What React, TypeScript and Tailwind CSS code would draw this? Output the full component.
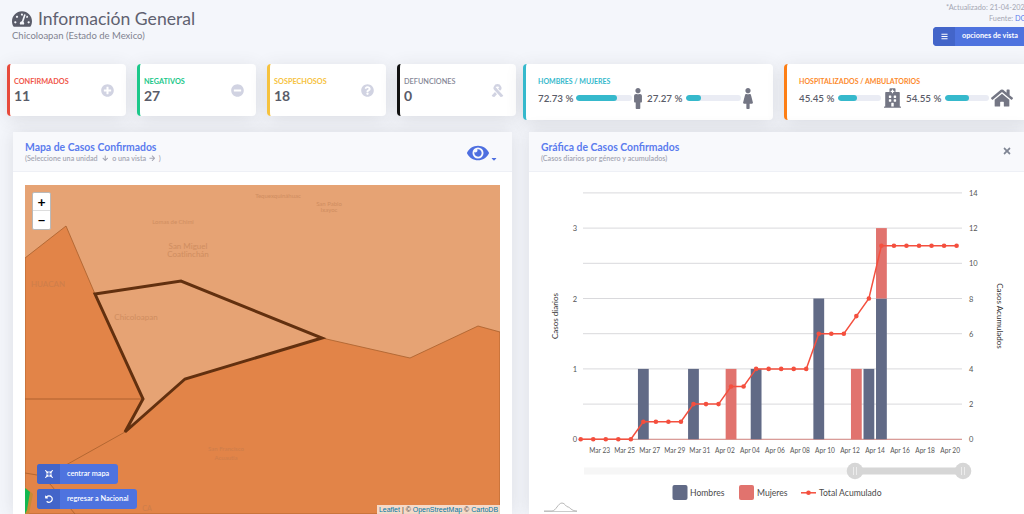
import {
  FaArrowDown,
  FaArrowRight,
  FaBars,
  FaCaretDown,
  FaCompressArrowsAlt,
  FaEye,
  FaFemale,
  FaHome,
  FaHospital,
  FaMale,
  FaMinusCircle,
  FaPlusCircle,
  FaQuestionCircle,
  FaRibbon,
  FaTachometerAlt,
  FaTimes,
  FaUndoAlt,
} from "react-icons/fa";
import type { ReactNode } from "react";

const font = { fontFamily: "Lato, 'Noto Sans', sans-serif" };

function SmallCard({ label, value, color, text, icon }: { label: string; value: string; color: string; text: string; icon: ReactNode }) {
  return (
    <div className={`w-[119px] h-[52px] bg-white rounded border-l-[3px] ${color} shadow-[0_3px_18px_rgba(58,59,69,0.13)] pl-[4px] pr-3 flex items-center justify-between`}>
      <div className="mt-[2px]">
        <div className={`text-[7.3px] leading-[10px] font-bold uppercase ${text}`}>{label}</div>
        <div className="text-[14px] leading-[18px] font-bold text-[#5a5c69]">{value}</div>
      </div>
      <div className="text-[13px] text-[#d1d3e2] mt-[1px]">{icon}</div>
    </div>
  );
}

function Bar({ w, fill }: { w: string; fill: string }) {
  return (
    <div className={`${w} h-[6px] bg-[#eaecf4] rounded-full overflow-hidden`}>
      <div className={`${fill} h-full bg-[#36b9cc] rounded-full`} />
    </div>
  );
}

function Pct({ value }: { value: string }) {
  return <span className="block w-[35px] shrink-0 text-[9.8px] leading-[12px] font-semibold text-[#5a5c69] whitespace-nowrap">{value}</span>;
}

function WideCard({ width, border, title, titleColor, children }: { width: string; border: string; title: string; titleColor: string; children: ReactNode }) {
  return (
    <div className={`${width} h-[56px] bg-white rounded border-l-[3px] ${border} shadow-[0_3px_18px_rgba(58,59,69,0.13)] pl-3 pt-[12px]`}>
      <div className={`text-[7px] leading-[10px] font-bold uppercase ${titleColor}`}>{title}</div>
      <div className="flex items-center h-[22px] mt-[1px]">{children}</div>
    </div>
  );
}

function PanelHeader({ title, sub, children }: { title: string; sub: ReactNode; children: ReactNode }) {
  return (
    <div className="h-[40px] bg-[#f8f9fc] border-b border-[#eef0f6] flex justify-between items-start pl-3 pr-3 pt-[8px] shrink-0">
      <div>
        <div className="text-[10.4px] leading-[14px] font-bold text-[#5b7cee]">{title}</div>
        <div className="text-[7.2px] leading-[9px] font-semibold text-[#a4a6b3]">{sub}</div>
      </div>
      {children}
    </div>
  );
}

function SplitButton({ icon, label, w }: { icon: ReactNode; label: string; w: string }) {
  return (
    <div className={`${w} h-[20px] flex rounded-[3px] overflow-hidden bg-[#4e73df] text-white`}>
      <div className="w-[23px] bg-[#4365c9] flex items-center justify-center text-[8px]">{icon}</div>
      <div className="flex-1 flex items-center pl-[7px] text-[7.3px] font-semibold whitespace-nowrap">{label}</div>
    </div>
  );
}

const mapLabels: { x: number; y: number; t: string; size: number }[] = [
  { x: 278, y: 198, t: "Tequexquináhuac", size: 6 },
  { x: 329, y: 206, t: "San Pablo", size: 6 },
  { x: 329, y: 212, t: "Ixayoc", size: 6 },
  { x: 173, y: 224, t: "Lomas de Chimi", size: 6 },
  { x: 188, y: 249, t: "San Miguel", size: 8 },
  { x: 188, y: 257, t: "Coatlinchán", size: 8 },
  { x: 48, y: 287, t: "HUACAN", size: 8 },
  { x: 136, y: 320, t: "Chicoloapan", size: 8 },
  { x: 226, y: 451, t: "San Francisco", size: 6 },
  { x: 226, y: 460, t: "Acuautla", size: 6 },
  { x: 147, y: 511, t: "CA", size: 7 },
];

function MapArt() {
  return (
    <svg viewBox="25 185 475 329" className="block w-[475px] h-[329px]">
      <rect x="25" y="185" width="475" height="329" fill="#e6a374" />
      <polygon
        points="25,258 66,226 95,294 143,399 125,432 185,379 322,338 410,358 478,326 500,332 500,514 25,514"
        fill="#e28448"
        stroke="#a85f2c"
        strokeWidth="0.8"
      />
      <polyline points="25,399 143,399" fill="none" stroke="#a2592a" strokeWidth="0.8" />
      <polyline points="125,432 66,465" fill="none" stroke="#a85f2c" strokeWidth="0.8" />
      <polyline points="25,473 37,475 50,484 75,514" fill="none" stroke="#a85f2c" strokeWidth="0.8" />
      <polygon points="25,487 33,494 29,514 25,514" fill="#c98a35" />
      <polygon points="25,488 30,492 27,510 25,514" fill="#12b84f" />
      <polygon
        points="95,294 181,281 322,338 185,379 125,432 143,399"
        fill="#e6a374"
        stroke="#62300f"
        strokeWidth="3"
        strokeLinejoin="miter"
      />
      {mapLabels.map((l) => (
        <text key={l.t} x={l.x} y={l.y} textAnchor="middle" fontSize={l.size} fill="#b9794e" opacity="0.5" fontFamily="Lato, sans-serif">
          {l.t}
        </text>
      ))}
    </svg>
  );
}

const cum = [0, 0, 0, 0, 0, 1, 1, 1, 1, 2, 2, 2, 3, 3, 4, 4, 4, 4, 4, 6, 6, 6, 7, 8, 11, 11, 11, 11, 11, 11, 11];
const men: Record<number, number> = { 5: 1, 9: 1, 14: 1, 19: 2, 23: 1, 24: 2 };
const women: Record<number, number> = { 12: 1, 22: 1, 24: 1 };
const dates = ["Mar 23", "Mar 25", "Mar 27", "Mar 29", "Mar 31", "Apr 02", "Apr 04", "Apr 06", "Apr 08", "Apr 10", "Apr 12", "Apr 14", "Apr 16", "Apr 18", "Apr 20"];

const px = (i: number) => 580.7 + i * 12.53;
const py = (v: number) => 439.3 - v * 17.6;
const unit = 70.4; // alto de un caso diario

function ChartArt() {
  const grid = [0, 2, 4, 6, 8, 10, 12, 14];
  return (
    <svg viewBox="529 172 495 342" className="block w-[495px] h-[342px]" fontFamily="Lato, sans-serif">
      {grid.map((g) => (
        <g key={g}>
          <line x1="583" x2="962" y1={py(g)} y2={py(g)} stroke="#d9d9dc" strokeWidth="1" />
          <text x="969" y={py(g) + 3} fontSize="7.5" fill="#555">{g}</text>
        </g>
      ))}
      {[0, 1, 2, 3].map((n) => (
        <text key={n} x="577" y={439.3 - n * unit + 3} fontSize="7.5" fill="#555" textAnchor="end">{n}</text>
      ))}
      <line x1="583" x2="962" y1="439.3" y2="439.3" stroke="#d98b85" strokeWidth="1" />
      {cum.map((_, i) => {
        const m = men[i] || 0;
        const w = women[i] || 0;
        return (
          <g key={i}>
            {m > 0 && <rect x={px(i) - 5.4} y={439.3 - m * unit} width="10.8" height={m * unit} fill="#616a86" />}
            {w > 0 && <rect x={px(i) - 5.4} y={439.3 - (m + w) * unit} width="10.8" height={w * unit} fill="#e1736e" />}
          </g>
        );
      })}
      <polyline
        points={cum.map((v, i) => `${px(i)},${py(v)}`).join(" ")}
        fill="none"
        stroke="#f44f3e"
        strokeWidth="1.5"
      />
      {cum.map((v, i) => (
        <circle key={i} cx={px(i)} cy={py(v)} r="2.3" fill="#f44f3e" />
      ))}
      {dates.map((d, i) => (
        <text key={d} x={599.7 + i * 25.03} y="453" fontSize="6.6" fill="#555" textAnchor="middle">{d}</text>
      ))}
      <text transform="translate(558 316) rotate(-90)" fontSize="8" fill="#333" textAnchor="middle">Casos diarios</text>
      <text transform="translate(997 316) rotate(90)" fontSize="8" fill="#333" textAnchor="middle">Casos Acumulados</text>

      <rect x="584" y="467.5" width="272" height="7" fill="#f6f6f6" />
      <rect x="855" y="467.5" width="108" height="7" fill="#d6d6d6" />
      {[855, 963].map((c) => (
        <g key={c}>
          <circle cx={c} cy="471" r="8.3" fill="#d6d6d6" />
          <line x1={c - 1.5} x2={c - 1.5} y1="467" y2="475" stroke="#ececec" strokeWidth="1" />
          <line x1={c + 1.5} x2={c + 1.5} y1="467" y2="475" stroke="#ececec" strokeWidth="1" />
        </g>
      ))}

      <rect x="672.5" y="485" width="15" height="15" rx="2" fill="#616a86" />
      <text x="690" y="496" fontSize="8.6" fill="#4a4a4a">Hombres</text>
      <rect x="739" y="485" width="15" height="15" rx="2" fill="#e1736e" />
      <text x="757" y="496" fontSize="8.6" fill="#4a4a4a">Mujeres</text>
      <line x1="801" x2="816" y1="492.8" y2="492.8" stroke="#f44f3e" strokeWidth="1.5" />
      <circle cx="808.5" cy="492.8" r="2.3" fill="#f44f3e" />
      <text x="819" y="496" fontSize="8.6" fill="#4a4a4a">Total Acumulado</text>

      <path d="M544 511 H552 C556 511 558 503 562 503 C565 503 566 507 568 507 C570 507 571 511 577 511" fill="none" stroke="#9a9a9a" strokeWidth="0.7" />
      <line x1="544" x2="577" y1="511.5" y2="511.5" stroke="#b5b5b5" strokeWidth="0.7" />
    </svg>
  );
}

export default function App() {
  return (
    <div className="w-[1024px] h-[514px] overflow-hidden bg-[#f4f6fb] text-[#5a5c69]" style={font}>
      <header className="h-[64px] flex justify-between pl-3">
        <div className="pt-[8px]">
          <div className="flex items-center gap-[6px]">
            <FaTachometerAlt className="text-[20px] text-[#5a5c69]" />
            <h1 className="text-[17.6px] leading-[22px] text-[#5f6170]">Información General</h1>
          </div>
          <div className="text-[9.5px] leading-[12px] text-[#80828f]">Chicoloapan (Estado de Mexico)</div>
        </div>
        <div className="w-[91px] shrink-0 pt-[3px]">
          <div className="text-[7.3px] leading-[10px] text-[#a4a6b3] whitespace-nowrap ml-[13px]">*Actualizado: 21-04-2020</div>
          <div className="text-[7.3px] leading-[10px] text-[#a4a6b3] whitespace-nowrap mt-[1px] ml-[56px]">
            Fuente: <span className="text-[#5b7cee]">DGE</span>
          </div>
          <div className="w-[100px] h-[19px] flex rounded-l-[4px] overflow-hidden bg-[#4e73df] text-white mt-[3px]">
            <div className="w-[22px] bg-[#4365c9] flex items-center justify-center text-[7px]"><FaBars /></div>
            <div className="flex-1 pl-[7px] flex items-center text-[7.3px] font-bold whitespace-nowrap">opciones de vista</div>
          </div>
        </div>
      </header>

      <section className="flex items-start pl-[7px] h-[68px]">
        <div className="flex gap-[11px]">
          <SmallCard label="Confirmados" value="11" color="border-[#e74a3b]" text="text-[#f0564a]" icon={<FaPlusCircle />} />
          <SmallCard label="Negativos" value="27" color="border-[#1cc88a]" text="text-[#1cc88a]" icon={<FaMinusCircle />} />
          <SmallCard label="Sospechosos" value="18" color="border-[#f6c23e]" text="text-[#f6c23e]" icon={<FaQuestionCircle />} />
          <SmallCard label="Defunciones" value="0" color="border-[#111111]" text="text-[#858796] font-semibold" icon={<FaRibbon />} />
        </div>
        <div className="ml-[7px] flex gap-[11px]">
          <WideCard width="w-[250px]" border="border-[#36b9cc]" title="Hombres / Mujeres" titleColor="text-[#36b9cc]">
            <Pct value="72.73 %" />
            <div className="ml-[3px]"><Bar w="w-[56px]" fill="w-[73%]" /></div>
            <FaMale className="text-[21px] text-[#747684] ml-[-2px] w-[16px]" />
            <div className="ml-[1px]"><Pct value="27.27 %" /></div>
            <div className="ml-[4px]"><Bar w="w-[55px]" fill="w-[27%]" /></div>
            <FaFemale className="text-[21px] text-[#747684] ml-[-1px] w-[16px]" />
          </WideCard>
          <WideCard width="w-[250px]" border="border-[#fd7e14]" title="Hospitalizados / Ambulatorios" titleColor="text-[#fd8a2c]">
            <Pct value="45.45 %" />
            <div className="ml-[4px]"><Bar w="w-[43px]" fill="w-[45%]" /></div>
            <FaHospital className="text-[20px] text-[#747684] ml-[3px] w-[17px]" />
            <div className="ml-[5px]"><Pct value="54.55 %" /></div>
            <div className="ml-[4px]"><Bar w="w-[44px]" fill="w-[55%]" /></div>
            <FaHome className="text-[22px] text-[#747684] ml-[2px]" />
          </WideCard>
        </div>
      </section>

      <main className="flex gap-[17px] pl-[13px]">
        <div className="w-[499px] h-[382px] bg-white rounded-t shadow-[0_0_18px_rgba(58,59,69,0.13)] flex flex-col shrink-0">
          <PanelHeader
            title="Mapa de Casos Confirmados"
            sub={
              <span className="inline-flex items-center gap-[3px]">
                (Seleccione una unidad <FaArrowDown className="text-[6.5px] mx-[1px]" /> o una vista <FaArrowRight className="text-[6.5px]" />)
              </span>
            }
          >
            <div className="flex items-end text-[#4e6fe0] mr-[2px] mt-[2px]">
              <FaEye className="text-[22px]" />
              <FaCaretDown className="text-[8px] ml-[1px] mb-[1px]" />
            </div>
          </PanelHeader>
          <div className="pl-3 pt-[13px]">
            <div className="relative w-[475px] h-[329px] overflow-hidden">
              <MapArt />
              <div className="absolute left-[7px] top-[7px] w-[19px] h-[38px] bg-white rounded-[2px] border border-[#b9b9b9] flex flex-col text-black font-bold">
                <div className="h-[18px] border-b border-[#dddddd] flex items-center justify-center text-[14px] leading-none">+</div>
                <div className="flex-1 flex items-center justify-center text-[14px] leading-none">−</div>
              </div>
              <div className="absolute left-[12px] top-[279px] flex flex-col gap-[5px]">
                <SplitButton icon={<FaCompressArrowsAlt />} label="centrar mapa" w="w-[81px]" />
                <SplitButton icon={<FaUndoAlt />} label="regresar a Nacional" w="w-[100px]" />
              </div>
              <div className="absolute right-0 bottom-0 h-[9px] w-[123px] bg-[#ffffffb3] font-['Liberation_Sans',sans-serif] text-[7px] leading-[9px] text-[#333] text-center whitespace-nowrap">
                <span className="text-[#0078a8]">Leaflet</span> | © <span className="text-[#0078a8]">OpenStreetMap</span> © <span className="text-[#0078a8]">CartoDB</span>
              </div>
            </div>
          </div>
        </div>

        <div className="w-[495px] h-[382px] bg-white rounded-t shadow-[0_0_18px_rgba(58,59,69,0.13)] flex flex-col shrink-0">
          <PanelHeader title="Gráfica de Casos Confirmados" sub="(Casos diarios por género y acumulados)">
            <FaTimes className="text-[10px] text-[#7f8594] mt-[6px]" />
          </PanelHeader>
          <ChartArt />
        </div>
      </main>
    </div>
  );
}
